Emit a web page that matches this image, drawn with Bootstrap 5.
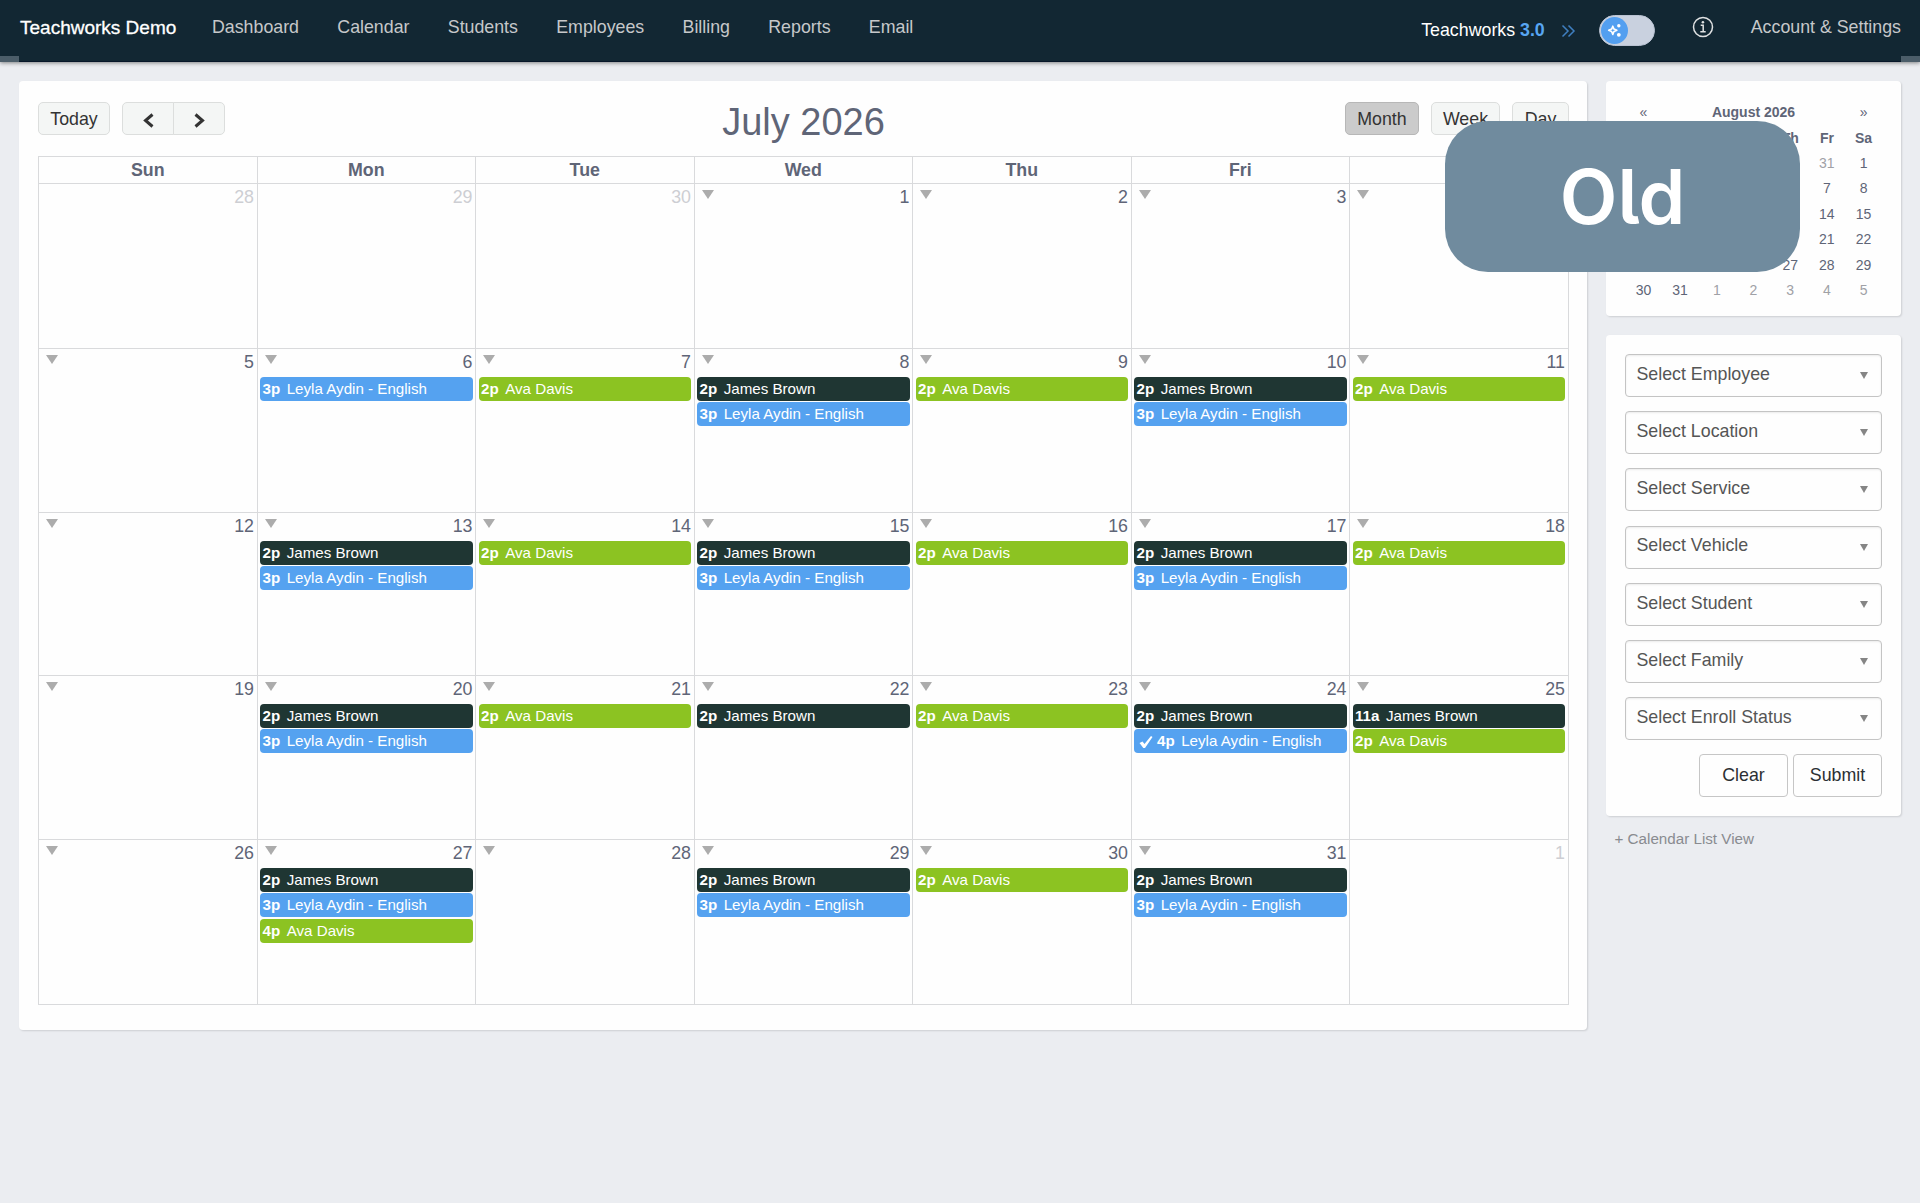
<!DOCTYPE html>
<html lang="en">
<head>
  <meta charset="UTF-8" />
  <meta name="viewport" content="width=device-width, initial-scale=1.0"/>
  <title>Teachworks Demo</title>
  <link href="https://cdn.jsdelivr.net/npm/bootstrap@5.3.0/dist/css/bootstrap.min.css" rel="stylesheet"/>
  <style>
    body {
      background: #ebedf1;
      font-family: "Liberation Sans", Arial, sans-serif;
      font-size: 17.8px;
      line-height: 1.2;
      color: #5f6577;
      min-height: 1203px;
      overflow: hidden;
    }
    /* Top bar */
    .topbar {
      height: 62px;
      padding: 0 19px 0 20px;
      background: #122733;
      border-bottom: 1px solid #08182a;
      box-shadow: 0 1px 4px rgba(0,0,0,0.45);
    }
    .topbar .navbar-brand {
      font-size: 19px;
      line-height: 21px;
      color: #fff;
      -webkit-text-stroke: 0.3px #fff;
      width: 173px;
      padding: 0;
      margin: 0 0 7px;
    }
    .topbar .nav-link {
      color: #c6c8ca;
      line-height: 21px;
      padding: 0;
      margin-bottom: 7px;
    }
    .main-links { gap: 38.3px; margin-left: 19px; }
    .new-version { color: #fff; padding-top: 1px; }
    .new-version b { color: #58a6f2; }
    .switch-track {
      width: 56px;
      height: 31px;
      background: #c9d1df;
      border: 1px solid #b9c2d2;
    }
    .switch-knob {
      width: 27px;
      height: 27px;
      margin: 1px;
      background: #539ff0;
    }
    .corner {
      top: 56px;
      width: 19px;
      height: 6px;
      background: #4b5d69;
    }

    /* Panels */
    .page { padding: 19px 19px 0; gap: 19px; }
    .panel {
      background: #fefefe;
      border-radius: 4px;
      box-shadow: 1px 1px 2px rgba(0,0,0,0.13);
    }
    .calendar-panel { width: 1568px; height: 949px; padding: 21px 18px 0 19px; }
    .side { width: 295px; }

    /* Calendar toolbar */
    .toolbar { height: 54px; }
    .cal-btn {
      --bs-btn-font-size: 17.8px;
      --bs-btn-line-height: 20px;
      --bs-btn-padding-x: 0;
      --bs-btn-padding-y: 6px;
      --bs-btn-bg: #f4f6f5;
      --bs-btn-border-color: #dcdedd;
      --bs-btn-color: #333;
      --bs-btn-border-radius: 5px;
      height: 33px;
    }
    .cal-btn.active {
      --bs-btn-active-bg: #cbcbcb;
      --bs-btn-active-border-color: #b7b7b7;
      --bs-btn-active-color: #333;
    }
    .cal-title { font-size: 38px; line-height: 40px; font-weight: 400; margin: 0; }

    /* Month grid */
    .month {
      display: grid;
      grid-template-columns: repeat(7, 1fr);
      grid-template-rows: 27px 165px 164px 163px 164px 165px;
      border: solid #d9dadc;
      border-width: 0 1px 1px 0;
      width: 1530.5px;
    }
    .month > div { border: solid #d9dadc; border-width: 1px 0 0 1px; min-width: 0; }
    .day-name { font-weight: 700; text-align: center; line-height: 27px; }
    .day-head { height: 28px; padding: 0 2.5px 0 7px; line-height: 27px; }
    .other-month { color: #cdced3; }
    .day-arrow { border: 6px solid transparent; border-top: 9px solid #acacac; border-bottom: 0; margin-top: 6px; }
    .event {
      height: 24px;
      margin: 0 2.5px 1.3px;
      padding-left: 2.5px;
      border-radius: 4px;
      color: #fff;
      font-size: 15.15px;
      line-height: 23px;
      white-space: nowrap;
    }
    .event b { margin-right: 6.500px; }
    .ev-james { background: #1f3633; }
    .ev-leyla { background: #55a2f0; }
    .ev-ava { background: #8cc322; }

    /* Small calendar */
    .mini {
      display: grid;
      grid-template-columns: repeat(7, 36.7px);
      grid-auto-rows: 25.4px;
      place-items: center;
      justify-content: center;
      height: 235px;
      padding-top: 19px;
      font-size: 14px;
    }
    .mini .month-name { grid-column: 2 / span 5; font-weight: 700; }
    .mini .off { color: #a0a1a6; }

    /* Filters */
    .filters { height: 481px; margin-top: 19px; padding: 19px 19px 0; }
    .filter-select {
      height: 43px;
      margin-bottom: 14.2px;
      padding: 0 13px 2px 10.5px;
      border: 1px solid #c4c4c4;
      border-radius: 4px;
      box-shadow: inset 0 1px 2px rgba(0,0,0,0.08);
      color: #555;
    }
    .filter-select i { border: 4px solid transparent; border-top: 7px solid #858585; border-bottom: 0; margin-top: 2px; }
    .btn-filter {
      --bs-btn-font-size: 17.8px;
      --bs-btn-padding-x: 0;
      --bs-btn-padding-y: 0;
      --bs-btn-bg: #fefefe;
      --bs-btn-border-color: #c6c6c6;
      --bs-btn-border-radius: 4px;
      --bs-btn-color: #2b2f33;
      width: 89px;
      height: 43px;
    }
    .list-view { font-size: 15.2px; color: #898b90; padding: 14px 0 0 8.500px; }

    /* Label laid over the page */
    .version-label {
      left: 1445px;
      top: 121px;
      width: 355px;
      height: 151px;
      border-radius: 43px;
      background: #708b9e;
      color: #fff;
      font: 600 75px/151px Inter, "Noto Sans", sans-serif;
      font-feature-settings: "cv05";
      text-align: center;
    }
  </style>
</head>
<body>
  <nav class="navbar topbar navbar-expand position-relative flex-nowrap justify-content-start">
    <a class="navbar-brand" href="#">Teachworks Demo</a>
    <div class="d-flex main-links me-auto">
      <a class="nav-link" href="#">Dashboard</a>
      <a class="nav-link" href="#">Calendar</a>
      <a class="nav-link" href="#">Students</a>
      <a class="nav-link" href="#">Employees</a>
      <a class="nav-link" href="#">Billing</a>
      <a class="nav-link" href="#">Reports</a>
      <a class="nav-link" href="#">Email</a>
    </div>
    <div class="d-flex align-items-center">
      <span class="new-version">Teachworks <b>3.0</b></span>
      <svg class="ms-3" width="15" height="14" viewBox="0 0 15 14" fill="none" stroke="#3f7fc0" stroke-width="1.5"><path d="M1.500 1.500L7 7l-5.500 5.500M7.500 1.500L13 7l-5.500 5.500"/></svg>
      <div class="switch-track rounded-pill d-flex" style="margin-left: 23px">
        <div class="switch-knob rounded-circle d-flex align-items-center justify-content-center">
          <svg width="15" height="15" viewBox="0 0 15 15" fill="none" stroke="#fff" stroke-width="1.6" stroke-linejoin="round"><path d="M5.800 3.200l1.200 2.900 2.900 1.200L7 8.500l-1.200 2.900-1.200-2.900-2.900-1.200 2.900-1.200z"/><circle cx="11.800" cy="2.800" r="1.700" fill="#fff" stroke="none"/><circle cx="11.800" cy="11.800" r="1.900" fill="#fff" stroke="none"/></svg>
        </div>
      </div>
      <svg style="margin: 0 37px 7px 37px" width="22" height="22" viewBox="0 0 22 22" fill="none" stroke="#dfe1e2" stroke-width="1.500"><circle cx="11" cy="11" r="9.500"/><path d="M8.700 9.200h2.500v6.300M8.300 15.700h5.400"/><circle cx="10.900" cy="6.200" r="1.300" fill="#dfe1e2" stroke="none"/></svg>
      <a class="nav-link" href="#">Account &amp; Settings</a>
    </div>
    <span class="corner position-absolute start-0"></span>
    <span class="corner position-absolute end-0"></span>
  </nav>

  <main class="page d-flex align-items-start">
    <section class="panel calendar-panel">
      <div class="toolbar d-flex justify-content-between align-items-start">
        <div class="d-flex" style="width: 224px">
          <button class="btn cal-btn" style="width: 72px">Today</button>
          <div class="btn-group" style="margin-left: 12px; width: 103px">
            <button class="btn cal-btn"><svg class="d-block mx-auto mt-1" width="11" height="15" viewBox="0 0 11 15" fill="none" stroke="#333" stroke-width="3"><path d="M9.500 1.500l-7 6 7 6"/></svg></button>
            <button class="btn cal-btn"><svg class="d-block mx-auto mt-1" width="11" height="15" viewBox="0 0 11 15" fill="none" stroke="#333" stroke-width="3"><path d="M1.500 1.500l7 6-7 6"/></svg></button>
          </div>
        </div>
        <h2 class="cal-title">July 2026</h2>
        <div class="d-flex" style="gap: 12px">
          <button class="btn cal-btn active" style="width: 74px">Month</button>
          <button class="btn cal-btn" style="width: 69px">Week</button>
          <button class="btn cal-btn" style="width: 57px">Day</button>
        </div>
      </div>
      <div class="month" id="month"></div>
    </section>

    <aside class="side">
      <div class="panel mini" id="mini">
        <span>«</span><span class="month-name">August 2026</span><span>»</span>
      </div>
      <div class="panel filters">
        <div id="filters"></div>
        <div class="d-flex justify-content-end" style="gap: 5px">
          <button class="btn btn-filter">Clear</button>
          <button class="btn btn-filter">Submit</button>
        </div>
      </div>
      <div class="list-view">+ Calendar List View</div>
    </aside>
  </main>

  <div class="version-label position-absolute">Old</div>

  <script src="https://cdn.jsdelivr.net/npm/bootstrap@5.3.0/dist/js/bootstrap.bundle.min.js"></script>
  <script>
    const names = { james: "James Brown", leyla: "Leyla Aydin - English", ava: "Ava Davis" };
    const both = ["2p james", "3p leyla"];
    const ava = ["2p ava"];

    // Lessons by day of July
    const lessons = {
      6: ["3p leyla"], 7: ava, 8: both, 9: ava, 10: both, 11: ava,
      13: both, 14: ava, 15: both, 16: ava, 17: both, 18: ava,
      20: both, 21: ava, 22: ["2p james"], 23: ava, 24: ["2p james", "4p leyla done"], 25: ["11a james", "2p ava"],
      27: ["2p james", "3p leyla", "4p ava"], 29: both, 30: ava, 31: both
    };
    const check = '<svg width="14" height="12" viewBox="0 0 14 12" style="margin: 0 4.500px 0 2px"><path d="M0.500 7l3-1.500L5.500 8 12 0l1.500 1L6 12H4.300z" fill="#fff"/></svg>';

    function eventHtml(lesson) {
      const [time, who, done] = lesson.split(" ");
      return `<div class="event ev-${who}">${done ? check : ""}<b>${time}</b>${names[who]}</div>`;
    }

    // Cells that lie fully behind the label stay empty
    let html = ["Sun", "Mon", "Tue", "Wed", "Thu", "Fri", ""].map(d => `<div class="day-name">${d}</div>`).join("");
    for (let i = -2; i <= 32; i++) {
      const inMonth = i > 0 && i < 32;
      const num = i < 1 ? 30 + i : (i > 31 ? i - 31 : i);
      html += `<div><div class="day-head d-flex align-items-start ${inMonth ? "" : "other-month"}">
        ${inMonth ? '<span class="day-arrow"></span>' : ""}<span class="ms-auto">${i === 4 ? "" : num}</span></div>
        ${inMonth ? (lessons[i] || []).map(eventHtml).join("") : ""}</div>`;
    }
    document.getElementById("month").innerHTML = html;

    // August, starting from Sunday July 26
    let mini = ["", "", "", "", "Th", "Fr", "Sa"].map(d => `<b>${d}</b>`).join("");
    for (let i = -5; i <= 36; i++) {
      const off = i < 1 || i > 31;
      const covered = i < 27 && (i + 5) % 7 < 5;
      mini += `<span class="${off ? "off" : ""}">${covered ? "" : (i < 1 ? 31 + i : (i > 31 ? i - 31 : i))}</span>`;
    }
    document.getElementById("mini").innerHTML += mini;

    document.getElementById("filters").innerHTML = ["Employee", "Location", "Service", "Vehicle", "Student", "Family", "Enroll Status"]
      .map(f => `<div class="filter-select d-flex align-items-center justify-content-between">Select ${f}<i></i></div>`).join("");
  </script>
</body>
</html>
